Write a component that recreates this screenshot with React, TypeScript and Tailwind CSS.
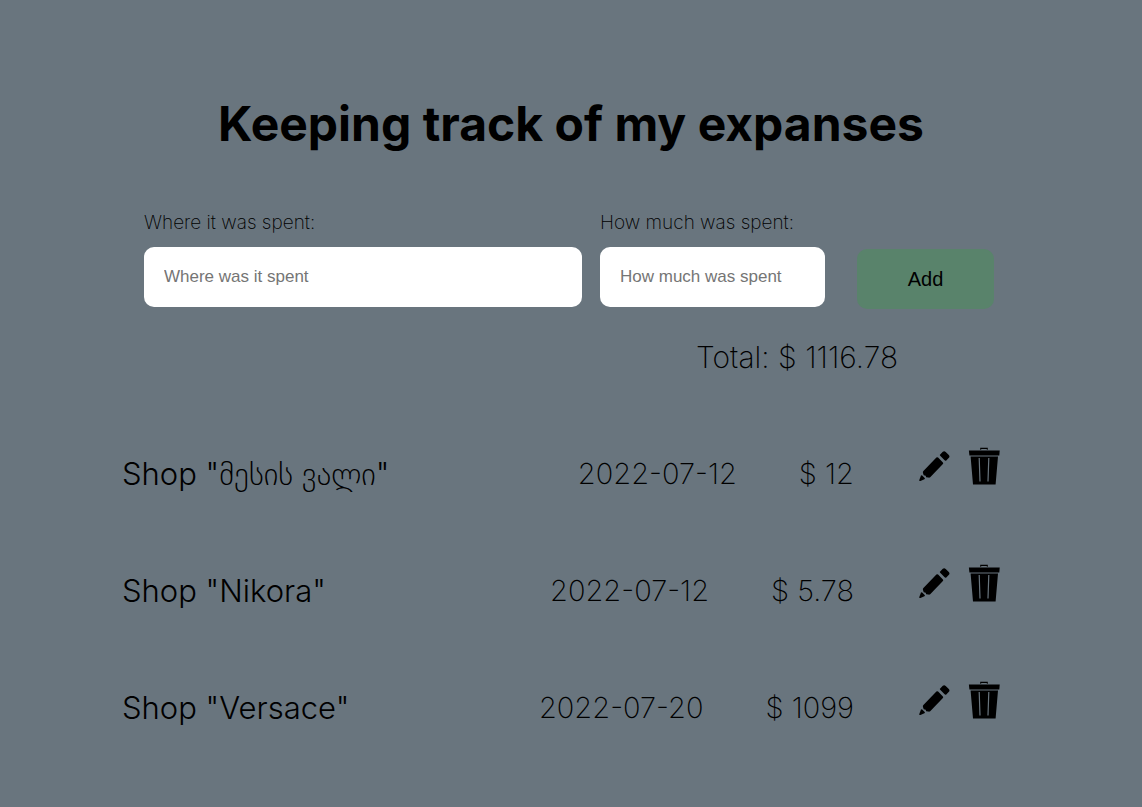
import { useState } from "react";

type Expense = { id: number; shop: string; date: string; price: number };

const initialExpenses: Expense[] = [
  { id: 1, shop: "მესის ვალი", date: "2022-07-12", price: 12 },
  { id: 2, shop: "Nikora", date: "2022-07-12", price: 5.78 },
  { id: 3, shop: "Versace", date: "2022-07-20", price: 1099 },
];

function PencilIcon() {
  return (
    <svg viewBox="0 0 32 32" className="h-8 w-8" fill="black" aria-hidden="true">
      <path d="M22.2 4.4 24.8 1.7q1.4-1.2 2.9.2l3.1 3.1q1.3 1.5.1 2.8l-2.6 2.6q-.9.6-1.7-.2l-4.4-4.4q-.8-.8 0-1.4Z" />
      <path d="M18.4 7.5q.9-.7 1.7.1l4.8 4.8q.7.8 0 1.6L12.2 27.2q-.8.7-1.8.4l-2.3-.3-.4-1.5-2-.5-.8-2.6q-.2-1 .5-1.7Z" />
      <path d="M2.9 25.7q.5-.7 1.3-.1l2.5 2.4q.6.8-.3 1.2L2.4 30.9q-1.5.5-1.1-1Z" />
    </svg>
  );
}

function TrashIcon() {
  return (
    <svg viewBox="0 0 32 38" className="h-[38px] w-8" fill="black" aria-hidden="true">
      <path d="M12.2 2.8V.7h7.6v2.1h-1V2h-5.6v.8Z" />
      <path d="M.9 3.6h30.8l-.4 4.8H1.4Z" />
      <path
        fillRule="evenodd"
        d="M2.6 9.4h27.4L27.6 37.4H5ZM10.6 11l.8 23.6h1.2L11.8 11ZM20.2 11l-.8 23.6h1.2L21.4 11Z"
      />
    </svg>
  );
}

export default function App() {
  const [expenses, setExpenses] = useState(initialExpenses);
  const [place, setPlace] = useState("");
  const [amount, setAmount] = useState("");
  const total = expenses.reduce((sum, item) => sum + item.price, 0);

  const addExpense = () => {
    const price = Number(amount);
    if (!place || !price) return;
    const date = new Date().toISOString().slice(0, 10);
    setExpenses([...expenses, { id: Date.now(), shop: place, date, price }]);
    setPlace("");
    setAmount("");
  };

  return (
    <main className="min-h-screen bg-[#69757e] px-6 pt-24 pb-12 font-['Inter','Noto_Sans','DejaVu_Sans',sans-serif] text-black">
      <div className="mx-auto max-w-[898px]">
        <h1 className="text-center text-5xl leading-14 font-bold">Keeping track of my expanses</h1>

        <form
          className="mt-[57px] flex items-start pr-[26px] pl-[22px]"
          onSubmit={(event) => {
            event.preventDefault();
            addExpense();
          }}
        >
          <div className="flex min-w-0 flex-1 flex-col gap-2.5">
            <label htmlFor="place" className="text-[19px] leading-7 font-extralight">
              Where it was spent:
            </label>
            <input
              id="place"
              value={place}
              onChange={(event) => setPlace(event.target.value)}
              placeholder="Where was it spent"
              className="h-15 rounded-[10px] bg-white px-5 font-['Liberation_Sans',sans-serif] text-[17px] placeholder:text-[#757575]"
            />
          </div>
          <div className="ml-[18px] flex w-[225px] flex-col gap-2.5">
            <label htmlFor="amount" className="text-[19px] leading-7 font-extralight">
              How much was spent:
            </label>
            <input
              id="amount"
              value={amount}
              onChange={(event) => setAmount(event.target.value)}
              placeholder="How much was spent"
              className="h-15 rounded-[10px] bg-white px-5 font-['Liberation_Sans',sans-serif] text-[17px] placeholder:text-[#757575]"
            />
          </div>
          <button
            type="submit"
            className="mt-10 ml-8 h-15 w-[137px] rounded-[10px] bg-[#59836b] font-['Liberation_Sans',sans-serif] text-xl"
          >
            Add
          </button>
        </form>

        <p className="mt-[30px] pr-[122px] text-right text-3xl font-extralight">Total: $ {total.toFixed(2)}</p>

        <ul className="mt-[72px] flex flex-col gap-[77px]">
          {expenses.map((item) => (
            <li key={item.id} className="flex h-10 items-start pr-5">
              <span className="flex-1 pt-[9px] text-[31px] leading-9 font-light">Shop "{item.shop}"</span>
              <span className="pt-[9px] text-[29px] leading-9 font-extralight">{item.date}</span>
              <span className="ml-[62px] pt-[9px] text-[29px] leading-9 font-extralight">$ {item.price}</span>
              <button type="button" aria-label={`Edit ${item.shop}`} className="mt-[3px] ml-16">
                <PencilIcon />
              </button>
              <button
                type="button"
                aria-label={`Delete ${item.shop}`}
                className="ml-[18px]"
                onClick={() => setExpenses(expenses.filter((other) => other.id !== item.id))}
              >
                <TrashIcon />
              </button>
            </li>
          ))}
        </ul>
      </div>
    </main>
  );
}
